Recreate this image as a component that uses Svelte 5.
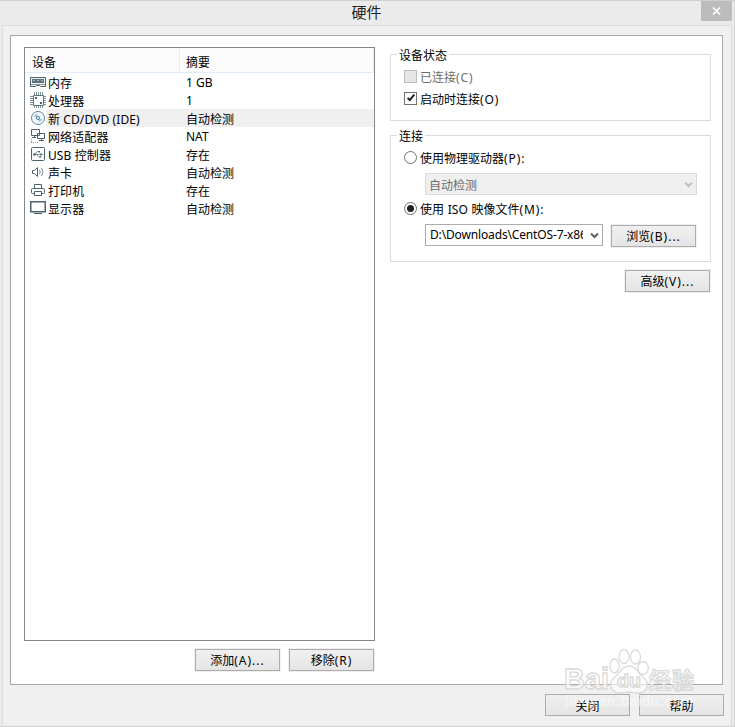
<script>
    const devices = [
        { icon: "memory", name: "内存", summary: "1 GB" },
        { icon: "cpu", name: "处理器", summary: "1" },
        { icon: "disc", name: "新 CD/DVD (IDE)", summary: "自动检测" },
        { icon: "network", name: "网络适配器", summary: "NAT" },
        { icon: "usb", name: "USB 控制器", summary: "存在" },
        { icon: "sound", name: "声卡", summary: "自动检测" },
        { icon: "printer", name: "打印机", summary: "存在" },
        { icon: "display", name: "显示器", summary: "自动检测" },
    ];

    let selected = $state(2);
    let connectAtPowerOn = $state(true);
    let source = $state("iso");

    const isLatin = (text) => /^[\x20-\x7e]+$/.test(text);
</script>

{#snippet deviceIcon(name)}
    <svg class="icon" width="16" height="16" viewBox="0 0 16 16" fill="none" stroke="#4c626d">
        {#if name === "memory"}
            <path d="M.5 3.500h15v9h-5l-1-1h-3l-1 1h-5z" fill="#eef2f3" />
            <path d="M2 5h12v4H2z" fill="#5d727c" stroke="none" />
            <path d="M3 6.500h2M7 6.500h2M11 6.500h2" stroke="#a9b6bc" />
            <path d="M1 10.500h14" stroke="#8b9aa1" />
        {:else if name === "cpu"}
            <path d="M4.500 0v3M6.500 0v3M8.500 0v3M10.500 0v3M12.500 0v3M4.500 14v2M6.500 14v2M8.500 14v2M10.500 14v2M12.500 14v2M0 4.500h3M0 6.500h3M0 8.500h3M0 10.500h3M0 12.500h3M14 4.500h2M14 6.500h2M14 8.500h2M14 10.500h2M14 12.500h2" stroke="#83939a" />
            <path d="M3.500 3.500h10v10h-10z" fill="#fff" stroke="#5f737d" />
            <path d="M5 5h2v2H5zM10 10h2v2h-2z" fill="#4c626d" stroke="none" />
        {:else if name === "disc"}
            <circle cx="8" cy="8" r="6.500" stroke="#607e9b" fill="#f5faff" />
            <path d="M3.500 7q1-3 4-3.500v2.500l-1.500 1zM12.500 9q-1 3-4 3.500V10l1.500-1z" fill="#a9c5dd" stroke="none" />
            <circle cx="8" cy="8" r="1.600" stroke="#397cae" />
        {:else if name === "network"}
            <path d="M1.500 1.500h8v6h-8zM7.500 5.500h7v5h-7z" fill="#fff" />
            <path d="M4.500 8v2M2 9.500h4M11.500 11v2M9 12.500h5" />
            <path d="M1 14.500h7M1.500 11v4" stroke="#8b9aa1" stroke-dasharray="1 1" />
        {:else if name === "usb"}
            <rect x="1.500" y="1.500" width="13" height="13" rx="1" fill="#fff" />
            <path d="M4 8.500h7M5.500 8l1.500-2.500h2M7 9l1.500 2h1.500" stroke="#8a999f" />
            <path d="M10.500 7l2.500 1.500-2.500 1.500zM8.500 5h1.500v1.500H8.500zM9.500 10h1.500v1.500H9.500z" fill="#4c626d" stroke="none" />
            <circle cx="4.500" cy="8.500" r="1.300" fill="#4c626d" stroke="none" />
        {:else if name === "sound"}
            <path d="M2.500 6.500h2l3-3v9l-3-3h-2z" fill="#fff" />
            <path d="M9.500 6q1.500 2 0 4M11.500 4q3 4 0 8" stroke="#78898f" />
        {:else if name === "printer"}
            <path d="M4.500 6V2.500h7V6" />
            <rect x="1.500" y="6.500" width="13" height="5" rx="1" fill="#fff" />
            <path d="M4.500 9.500h7v4h-7z" fill="#fff" />
        {:else if name === "display"}
            <path d="M.750 1.750h14.500v10H.750z" fill="#fff" stroke-width="1.500" />
            <path d="M4 13.500h8" />
        {/if}
    </svg>
{/snippet}

{#snippet chevron()}
    <svg class="chevron" width="9" height="7" viewBox="0 0 9 7">
        <path d="M1 1.500l3.500 3.500L8 1.500" fill="none" stroke="currentColor" stroke-width="2" />
    </svg>
{/snippet}

<div class="window">
    <header>
        <h1>硬件</h1>
        <button class="close" aria-label="关闭窗口">
            <svg width="9" height="8" viewBox="0 0 9 8">
                <path d="M1 .5l7 7M8 .5l-7 7" stroke="#fff" stroke-width="1.700" />
            </svg>
        </button>
    </header>

    <div class="body">
        <main>
            <section class="left">
                <div class="list">
                    <div class="head"><span>设备</span><span>摘要</span></div>
                    {#each devices as device, i}
                        <button class="row" class:selected={selected === i} onclick={() => (selected = i)}>
                            {@render deviceIcon(device.icon)}
                            <span class="name">{device.name}</span>
                            <span class="summary" class:latin={isLatin(device.summary)}>{device.summary}</span>
                        </button>
                    {/each}
                </div>
                <div class="actions">
                    <button class="btn">添加<span class="key">(A)...</span></button>
                    <button class="btn">移除<span class="key">(R)</span></button>
                </div>
            </section>

            <section class="right">
                <fieldset class="status">
                    <legend>设备状态</legend>
                    <label class="disabled"><input type="checkbox" disabled /><span>已连接<i>(C)</i></span></label>
                    <label><input type="checkbox" bind:checked={connectAtPowerOn} /><span>启动时连接<i>(O)</i></span></label>
                </fieldset>

                <fieldset class="connection">
                    <legend>连接</legend>
                    <label><input type="radio" value="drive" bind:group={source} /><span>使用物理驱动器<i>(P):</i></span></label>
                    <div class="combo off"><span>自动检测</span>{@render chevron()}</div>
                    <label><input type="radio" value="iso" bind:group={source} /><span>使用 ISO 映像文件<i>(M):</i></span></label>
                    <div class="file">
                        <div class="combo"><span class="path">D:\Downloads\CentOS-7-x86_64</span>{@render chevron()}</div>
                        <button class="btn">浏览<span class="key">(B)...</span></button>
                    </div>
                </fieldset>

                <button class="btn advanced">高级<span class="key">(V)...</span></button>
            </section>
        </main>

        <footer>
            <button class="btn">关闭</button>
            <button class="btn">帮助</button>
        </footer>
    </div>

    <svg class="watermark" width="140" height="70" viewBox="0 0 140 70">
        <g fill="#fff" fill-opacity=".6" stroke="#dadada" stroke-width="1.300">
            <ellipse cx="52.500" cy="20" rx="4.700" ry="7" />
            <ellipse cx="62" cy="10.500" rx="5" ry="7" />
            <ellipse cx="73.500" cy="11" rx="5" ry="7" />
            <ellipse cx="81" cy="22" rx="5.300" ry="6.500" />
            <path d="M67 20c7 0 8 6 14 11 8 6 4 16-5 16-4 0-6-1-9-1s-5 1-9 1c-9 0-13-10-5-16 6-5 7-11 14-11z" />
            <text x="2" y="43" class="brand" textLength="45" lengthAdjust="spacingAndGlyphs">Bai</text>
            <text x="55" y="41" class="du" textLength="24" lengthAdjust="spacingAndGlyphs">du</text>
            <text x="87" y="42" class="cn" textLength="45">经验</text>
        </g>
        <text x="3" y="60" class="url" textLength="128">jingyan.baidu.com</text>
    </svg>
</div>

<style>
    :global(body) {
        margin: 0;
    }

    .window {
        position: relative;
        box-sizing: border-box;
        width: 735px;
        height: 727px;
        display: flex;
        flex-direction: column;
        overflow: hidden;
        background: #ebebeb;
        border-top: 1px solid #d0d0d0;
        border-right: 1px solid #d4d4d4;
        border-bottom: 1px solid #d4d4d4;
        font: 12px/18px "Noto Sans", "Noto Sans CJK SC", sans-serif;
        color: #000;
    }

    header {
        display: flex;
        justify-content: flex-end;
        height: 24px;
    }

    h1 {
        flex: 1;
        margin: 0;
        padding-left: 32px;
        text-align: center;
        font-size: 15px;
        font-weight: 400;
        line-height: 23px;
        color: #222;
    }

    button {
        font: inherit;
        color: inherit;
        padding: 0;
        border: 0;
    }

    .close {
        width: 31px;
        height: 20px;
        margin-right: 2px;
        background: #bcbcbc;
        line-height: 0;
    }

    .body {
        flex: 1;
        margin: 0 2px 1px;
        border: 1px solid #dcdcdc;
        border-bottom: 0;
        background: #f0f0f0;
    }

    main {
        box-sizing: border-box;
        display: flex;
        gap: 15px;
        width: 713px;
        height: 650px;
        margin: 9px 0 0 7px;
        padding: 11px 11px 0 13px;
        border: 1px solid #a7a7a7;
        background: #fff;
    }

    .list {
        box-sizing: border-box;
        width: 351px;
        height: 594px;
        border: 1px solid #828790;
    }

    .head {
        display: flex;
        height: 24px;
        line-height: 30px;
        border-bottom: 1px solid #e3edf9;
        background: #fcfcfc;
    }

    .head span {
        box-sizing: border-box;
        width: 155px;
        padding-left: 7px;
        border-right: 1px solid #e3edf9;
    }

    .head span:last-child {
        width: 194px;
        padding-left: 6px;
    }

    .row {
        display: flex;
        width: 100%;
        height: 18px;
        background: none;
        line-height: 22px;
        text-align: left;
        white-space: nowrap;
    }

    .icon {
        flex: none;
        margin: 1px 0 0 5px;
    }

    .name {
        width: 136px;
        height: 18px;
        padding-left: 2px;
        letter-spacing: 0.1px;
    }

    .summary {
        flex: 1;
        height: 18px;
        padding-left: 2px;
    }

    .latin {
        line-height: 20px;
    }

    .selected .name,
    .selected .summary {
        background: #f0f0f0;
    }

    .actions {
        display: flex;
        justify-content: flex-end;
        gap: 9px;
        padding: 8px 1px 0 0;
    }

    .btn {
        box-sizing: border-box;
        flex: none;
        width: 85px;
        height: 22px;
        padding-top: 1px;
        border: 1px solid #acacac;
        background: linear-gradient(#f0f0f0, #e5e5e5);
        box-shadow: 0 0 0 1px #f0f0f0;
        line-height: 20px;
    }

    .key {
        letter-spacing: 1px;
    }

    .right {
        display: flex;
        flex-direction: column;
        width: 321px;
    }

    fieldset {
        box-sizing: border-box;
        position: relative;
        margin: 7px 0 0;
        padding: 12px 13px 0;
        border: 1px solid #dcdcdc;
    }

    legend {
        position: absolute;
        top: -8px;
        left: 6px;
        padding: 0 2px;
        background: #fff;
    }

    .status {
        height: 67px;
        padding-top: 11px;
    }

    .connection {
        height: 127px;
        margin-top: 14px;
    }

    label {
        display: flex;
        align-items: center;
        gap: 3px;
        height: 19px;
    }

    label span {
        padding-top: 2px;
        white-space: pre;
        word-spacing: 0.6px;
    }

    label i {
        font-style: normal;
        letter-spacing: 0.9px;
    }

    .status label {
        height: 21px;
        margin-bottom: 1px;
    }

    .disabled {
        color: #6d6d6d;
    }

    input {
        appearance: none;
        box-sizing: border-box;
        position: relative;
        width: 13px;
        height: 13px;
        margin: 0;
        border: 1px solid #707070;
        background: #fff;
    }

    input:disabled {
        border-color: #bcbcbc;
        background: #e6e6e6;
    }

    input[type="radio"] {
        border-radius: 50%;
    }

    input[type="radio"]:checked::after {
        content: "";
        position: absolute;
        inset: 2px;
        border-radius: 50%;
        background: #212121;
    }

    input[type="checkbox"]:checked::after {
        content: "";
        position: absolute;
        top: 0;
        left: 4px;
        width: 2px;
        height: 6px;
        border: solid #212121;
        border-width: 0 2px 2px 0;
        transform: rotate(40deg);
    }

    .combo {
        box-sizing: border-box;
        display: flex;
        align-items: center;
        width: 178px;
        height: 22px;
        padding: 0 3px 0 4px;
        border: 1px solid #acacac;
    }

    .combo span {
        flex: 1;
        white-space: nowrap;
    }

    .combo .path {
        flex: none;
        width: 153px;
        margin-right: 7px;
        overflow: hidden;
        letter-spacing: -0.15px;
    }

    .chevron {
        flex: none;
        color: #606060;
    }

    .off {
        width: 272px;
        margin: 6px 0 4px 21px;
        padding-left: 3px;
        border-color: #d9d9d9;
        background: #efefef;
        color: #6d6d6d;
    }

    .off span {
        padding-top: 3px;
    }

    .off .chevron {
        color: #bfbfbf;
    }

    .file {
        display: flex;
        gap: 8px;
        margin: 6px 0 0 21px;
    }

    .file .btn {
        margin-top: 1px;
    }

    .advanced {
        align-self: flex-end;
        margin: 8px 1px 0 0;
    }

    footer {
        display: flex;
        justify-content: flex-end;
        gap: 9px;
        padding: 9px 7px 0 0;
    }

    footer .btn {
        padding-top: 2px;
    }

    .watermark {
        position: absolute;
        left: 562px;
        top: 645px;
        pointer-events: none;
    }

    .brand {
        font: bold 29px "Liberation Sans", sans-serif;
    }

    .du {
        font: bold 19px "Liberation Sans", sans-serif;
    }

    .cn {
        font: bold 22px "Noto Sans CJK SC", sans-serif;
    }

    .url {
        font: 14px "Liberation Sans", sans-serif;
        fill: #fff;
        fill-opacity: 0.6;
    }
</style>
